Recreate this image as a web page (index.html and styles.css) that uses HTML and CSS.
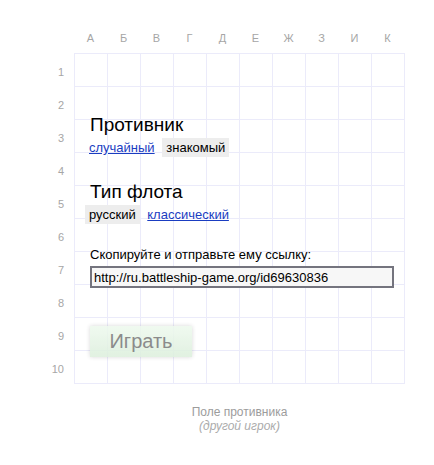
FILE: index.html
```html
<!DOCTYPE html>
<html lang="ru">
<head>
<meta charset="utf-8">
<title>Морской бой</title>
<link rel="stylesheet" href="styles.css">
</head>
<body>
<div class="field">
  <div class="corner"></div>
  <div class="letters">
    <span>А</span><span>Б</span><span>В</span><span>Г</span><span>Д</span><span>Е</span><span>Ж</span><span>З</span><span>И</span><span>К</span>
  </div>
  <div class="numbers">
    <span>1</span><span>2</span><span>3</span><span>4</span><span>5</span><span>6</span><span>7</span><span>8</span><span>9</span><span>10</span>
  </div>
  <div class="board">
    <h2 class="title">Противник</h2>
    <div class="choices">
      <a href="#" class="choice link">случайный</a> <span class="choice active">знакомый</span>
    </div>
    <h2 class="title title-second">Тип флота</h2>
    <div class="choices">
      <span class="choice active">русский</span> <a href="#" class="choice link">классический</a>
    </div>
    <div class="share-label">Скопируйте и отправьте ему ссылку:</div>
    <input class="share-input" type="text" value="http://ru.battleship-game.org/id69630836" readonly>
    <button class="play">Играть</button>
  </div>
</div>
<div class="caption">
  <div class="caption-main">Поле противника</div>
  <div class="caption-sub">(другой игрок)</div>
</div>
</body>
</html>
```

FILE: styles.css
```css
html, body {
  margin: 0;
  padding: 0;
  background: #fff;
  font-family: "Liberation Sans", Arial, sans-serif;
  color: #000;
}

.field {
  display: grid;
  grid-template-columns: 74px 331px;
  grid-template-rows: 53px 331px;
}

.letters {
  display: flex;
  align-items: flex-end;
  padding-bottom: 8px;
  box-sizing: border-box;
}

.letters span {
  width: 33px;
  text-align: center;
  font-size: 11px;
  line-height: 13px;
  color: #a6a6a6;
}

.numbers {
  display: flex;
  flex-direction: column;
}

.numbers span {
  height: 33px;
  box-sizing: border-box;
  padding-top: 5px;
  padding-right: 10px;
  display: flex;
  align-items: center;
  justify-content: flex-end;
  font-size: 11px;
  line-height: 13px;
  color: #a6a6a6;
}

.board {
  width: 331px;
  height: 331px;
  box-sizing: border-box;
  border-right: 1px solid #ebebfa;
  border-bottom: 1px solid #ebebfa;
  background-image:
    linear-gradient(to right, #ebebfa 1px, transparent 1px),
    linear-gradient(to bottom, #ebebfa 1px, transparent 1px);
  background-size: 33px 33px;
  padding: 60px 0 0 16px;
  display: flex;
  flex-direction: column;
  align-items: flex-start;
}

.title {
  margin: 0;
  font-size: 19px;
  line-height: 23px;
  font-weight: normal;
}

.title-second {
  margin-top: 23px;
}

.choices {
  margin: 3px 0 0 -5px;
  font-size: 13px;
  line-height: 18px;
  height: 18px;
}

.choice {
  padding: 2px 4px;
}

.link {
  color: #1a3dc1;
  text-decoration: underline;
}

.active {
  background: #ededed;
}

.share-label {
  margin-top: 23px;
  font-size: 13px;
  line-height: 15px;
}

.share-input {
  margin: 4px 0 0 0;
  width: 304px;
  height: 22px;
  box-sizing: border-box;
  border: 2px solid #74747e;
  background: #f7f7f7;
  padding: 0 2px;
  font-family: "Liberation Sans", Arial, sans-serif;
  font-size: 13px;
  color: #000;
  outline: none;
}

.play {
  margin-top: 38px;
  width: 102px;
  height: 31px;
  border: none;
  background: linear-gradient(to bottom, #eef9ee, #dcefdc);
  opacity: 0.85;
  box-shadow: 0 0 4px rgba(0, 0, 0, 0.18);
  color: #777;
  font-family: "Liberation Sans", Arial, sans-serif;
  font-size: 20px;
  padding: 0;
}

.caption {
  margin: 21px 0 0 74px;
  width: 331px;
  text-align: center;
  line-height: 14px;
}

.caption-main {
  font-size: 12px;
  color: #9c9c9c;
}

.caption-sub {
  font-size: 12px;
  font-style: italic;
  color: #ababab;
}
```
